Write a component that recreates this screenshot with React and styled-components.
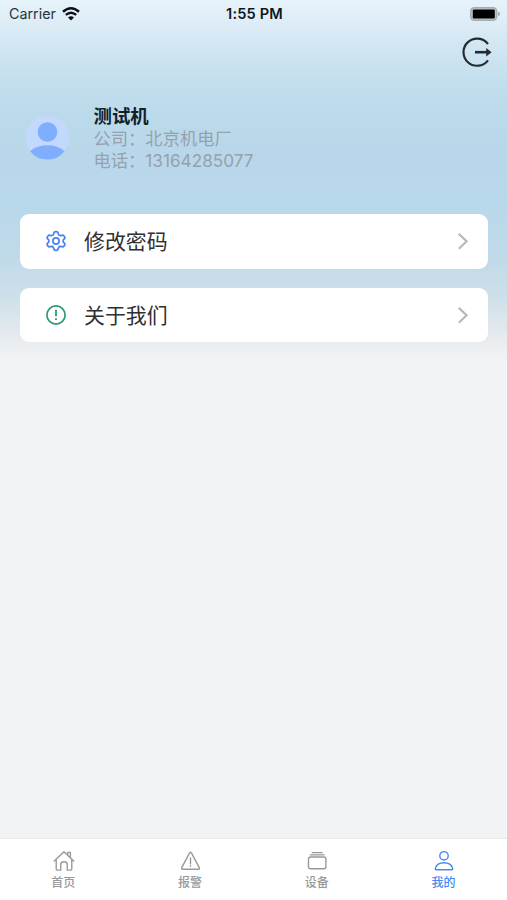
import React from 'react';
import styled, { createGlobalStyle } from 'styled-components';

const GlobalStyle = createGlobalStyle`
  * {
    box-sizing: border-box;
  }

  body {
    margin: 0;
    background-color: #f2f3f5;
    font-family: Inter, 'Noto Sans CJK SC', sans-serif;
  }

  svg {
    display: block;
    flex: none;
    overflow: visible;
  }
`;

const StyledScreen = styled.div`
  display: flex;
  flex-direction: column;
  height: 900px;
  background: #f2f3f5
    linear-gradient(
      #e7f3fa 0,
      #dcecf6 25px,
      #cfe5f1 52px,
      #c3dfee 80px,
      #bbdaeb 110px,
      #b8d7ea 150px,
      #b8d8eb 205px,
      #c1dae9 260px,
      #cddfe9 295px,
      #dfe7ed 325px,
      #ebeef1 345px,
      #f2f3f5 360px
    );
`;

const StyledStatusBar = styled.div`
  display: grid;
  grid-template-columns: 1fr auto 1fr;
  align-items: center;
  height: 27px;
  padding: 0 7px 0 9px;
  color: #10181d;
  font-size: 14.3px;

  .carrier {
    display: flex;
    align-items: center;
    gap: 6px;
    color: #28343b;
  }

  .time {
    font-weight: 600;
    font-size: 14.6px;
    letter-spacing: 0.15px;
  }

  .battery {
    justify-self: end;
  }
`;

const StyledHeader = styled.header`
  display: flex;
  justify-content: flex-end;
  padding: 10px 15px 0 0;
  height: 77px;
`;

const StyledLogout = styled.button`
  width: 31px;
  height: 30px;
  padding: 0;
  border: 0;
  background: none;
`;

const StyledProfile = styled.section`
  display: flex;
  align-items: flex-start;
  height: 110px;
  padding-left: 25px;

  .avatar {
    margin-top: 11px;
  }

  .details {
    margin-top: 1px;
    margin-left: 24.5px;
  }
`;

const StyledName = styled.h1`
  margin: 0;
  color: #141e25;
  font-size: 18.4px;
  font-weight: 700;
  line-height: 23px;
`;

const StyledInfo = styled.p`
  margin: 0;
  color: #96a1ad;
  font-size: 17.3px;
  line-height: 22px;
  white-space: nowrap;

  .number {
    font-size: 17.2px;
  }
`;

const StyledMenu = styled.nav`
  display: flex;
  flex-direction: column;
  flex: 1;
  gap: 19px;
  padding: 0 19px 0 20px;
`;

const StyledMenuItem = styled.a`
  display: flex;
  align-items: center;
  height: 54.5px;
  padding: 0 19px 0 25px;
  border-radius: 9px;
  background-color: #fff;
  color: #2f2f31;
  font-size: 20.9px;

  .label {
    flex: 1;
    margin-left: 17px;
    padding-bottom: 2px;
  }
`;

const StyledTabBar = styled.footer`
  display: grid;
  grid-template-columns: repeat(4, 1fr);
  height: 62px;
  border-top: 1px solid #e8eaed;
  background-color: #fff;
`;

const StyledTab = styled.a`
  display: flex;
  flex-direction: column;
  align-items: center;
  gap: 1px;
  padding-top: 11px;
  color: ${({ $active }) => ($active ? '#478af3' : '#999')};
  font-size: 12px;
  font-weight: 500;
  line-height: 20px;
`;

const WifiIcon = () => (
  <svg width="18" height="14" viewBox="0 0 18 14" fill="none" stroke="#0b1115">
    <path d="M1 4.8Q9-2.2 17 4.8" strokeWidth="2.5" />
    <path d="M3.8 7.9Q9 3.5 14.2 7.9" strokeWidth="2.3" />
    <path d="M9 13.6 6 10.5Q9 8 12 10.5Z" fill="#0b1115" stroke="none" />
  </svg>
);

const BatteryIcon = () => (
  <svg className="battery" width="30" height="14" viewBox="0 0 30 14">
    <rect x="0.7" y="0.7" width="26" height="12.6" rx="3.6" fill="#b9c2c6" stroke="#a4acb0" strokeWidth="1.3" />
    <rect x="2.8" y="2.6" width="22" height="8.8" rx="1.2" fill="#000" />
    <path d="M28 4.8Q30 5.4 30 7T28 9.2Z" fill="#a4acb0" />
  </svg>
);

const LogoutIcon = () => (
  <svg width="31" height="30" viewBox="0 0 31 30" fill="none" stroke="#252c31" strokeWidth="2.2">
    <path d="M27 7A13.6 13.6 0 1 0 27 23.3" />
    <path d="M14 15.2H27" strokeWidth="2.6" />
    <path d="M25.2 11 30.6 15.2 25.2 19.4Z" fill="#252c31" stroke="none" />
  </svg>
);

const AvatarIcon = () => (
  <svg className="avatar" width="44" height="45" viewBox="0 0 44 45">
    <circle cx="22.5" cy="22.2" r="21.8" fill="#c2d8fd" />
    <circle cx="22.5" cy="17" r="9.8" fill="#80aefe" />
    <path d="M5.2 36.2Q12 30.3 22.3 30.3T39.6 36.2Q33 44.6 22.3 44.6T5.2 36.2Z" fill="#80aefe" />
  </svg>
);

const GearIcon = () => (
  <svg width="22" height="22" viewBox="0 0 22 22" fill="none" stroke="#4a82ed" strokeWidth="1.7" strokeLinejoin="round">
    <path d="M9.3 2.1Q11 1.2 12.7 2.1L13.7 4.8Q14.4 5.4 15.4 5.6L18.2 5.1Q19.7 6.2 20 8L18.2 10.1Q18 11 18.2 11.9L20 14Q19.7 15.8 18.2 16.9L15.4 16.4Q14.4 16.6 13.7 17.2L12.7 19.9Q11 20.8 9.3 19.9L8.3 17.2Q7.6 16.6 6.6 16.4L3.8 16.9Q2.3 15.8 2 14L3.8 11.9Q4 11 3.8 10.1L2 8Q2.3 6.2 3.8 5.1L6.6 5.6Q7.6 5.4 8.3 4.8Z" />
    <circle cx="11" cy="11" r="3.1" />
  </svg>
);

const AboutIcon = () => (
  <svg width="22" height="22" viewBox="0 0 22 22" fill="none" stroke="#2b9875" strokeWidth="1.7">
    <circle cx="11" cy="11" r="9.1" />
    <path d="M11 5.8V12.2M11 14.2V16.1" strokeWidth="1.8" />
  </svg>
);

const ChevronIcon = () => (
  <svg width="12" height="18" viewBox="0 0 12 18" fill="none" stroke="#b9b9b9" strokeWidth="2.2">
    <path d="M1.8 1.9 9.6 9.3 1.8 16.7" />
  </svg>
);

const tabSvg = {
  width: 22,
  height: 22,
  viewBox: '0 0 22 22',
  fill: 'none',
  stroke: 'currentColor',
  strokeWidth: 1.4,
  strokeLinejoin: 'round',
  strokeLinecap: 'round',
};

const HomeIcon = () => (
  <svg {...tabSvg}>
    <path d="M2.3 11 12 1.8 21.7 11M15.8 5V2.4H18.4V7.6" />
    <path d="M4.2 9.4V18.9Q4.2 20.1 5.4 20.1H8.8V14.2Q8.8 11.8 12 11.8T15.2 14.2V20.1H18.6Q19.8 20.1 19.8 18.9V9.4" />
  </svg>
);

const AlarmIcon = () => (
  <svg {...tabSvg}>
    <path d="M10.6 2.8Q11.5 1.4 12.4 2.8L20.3 17.6Q20.8 19.2 19.3 19.3H3.7Q2.2 19.2 2.7 17.6Z" />
    <path d="M11.5 8V13.7M11.5 15.8V16.2" />
  </svg>
);

const DeviceIcon = () => (
  <svg {...tabSvg}>
    <path d="M6.2 2.6H16.2M4.4 4.9H18" />
    <rect x="2.5" y="7" width="17.4" height="11.8" rx="2" />
  </svg>
);

const MineIcon = () => (
  <svg {...tabSvg}>
    <circle cx="11" cy="5.8" r="4.2" />
    <path d="M3 19.8Q2.1 19.8 2.3 18.6C3.3 14.8 6.4 12.8 11 12.8S18.7 14.8 19.7 18.6Q19.9 19.8 19 19.8Z" />
  </svg>
);

const menuItems = [
  { label: '修改密码', Icon: GearIcon },
  { label: '关于我们', Icon: AboutIcon },
];

const tabs = [
  { label: '首页', Icon: HomeIcon },
  { label: '报警', Icon: AlarmIcon },
  { label: '设备', Icon: DeviceIcon },
  { label: '我的', Icon: MineIcon, active: true },
];

const App = () => (
  <>
    <GlobalStyle />
    <StyledScreen>
      <StyledStatusBar>
        <div className="carrier">
          Carrier
          <WifiIcon />
        </div>
        <div className="time">1:55 PM</div>
        <BatteryIcon />
      </StyledStatusBar>

      <StyledHeader>
        <StyledLogout>
          <LogoutIcon />
        </StyledLogout>
      </StyledHeader>

      <StyledProfile>
        <AvatarIcon />
        <div className="details">
          <StyledName>测试机</StyledName>
          <StyledInfo>公司：北京机电厂</StyledInfo>
          <StyledInfo>
            电话：<span className="number">13164285077</span>
          </StyledInfo>
        </div>
      </StyledProfile>

      <StyledMenu>
        {menuItems.map(({ label, Icon }) => (
          <StyledMenuItem key={label}>
            <Icon />
            <span className="label">{label}</span>
            <ChevronIcon />
          </StyledMenuItem>
        ))}
      </StyledMenu>

      <StyledTabBar>
        {tabs.map(({ label, Icon, active }) => (
          <StyledTab key={label} $active={active}>
            <Icon />
            {label}
          </StyledTab>
        ))}
      </StyledTabBar>
    </StyledScreen>
  </>
);

export default App;
